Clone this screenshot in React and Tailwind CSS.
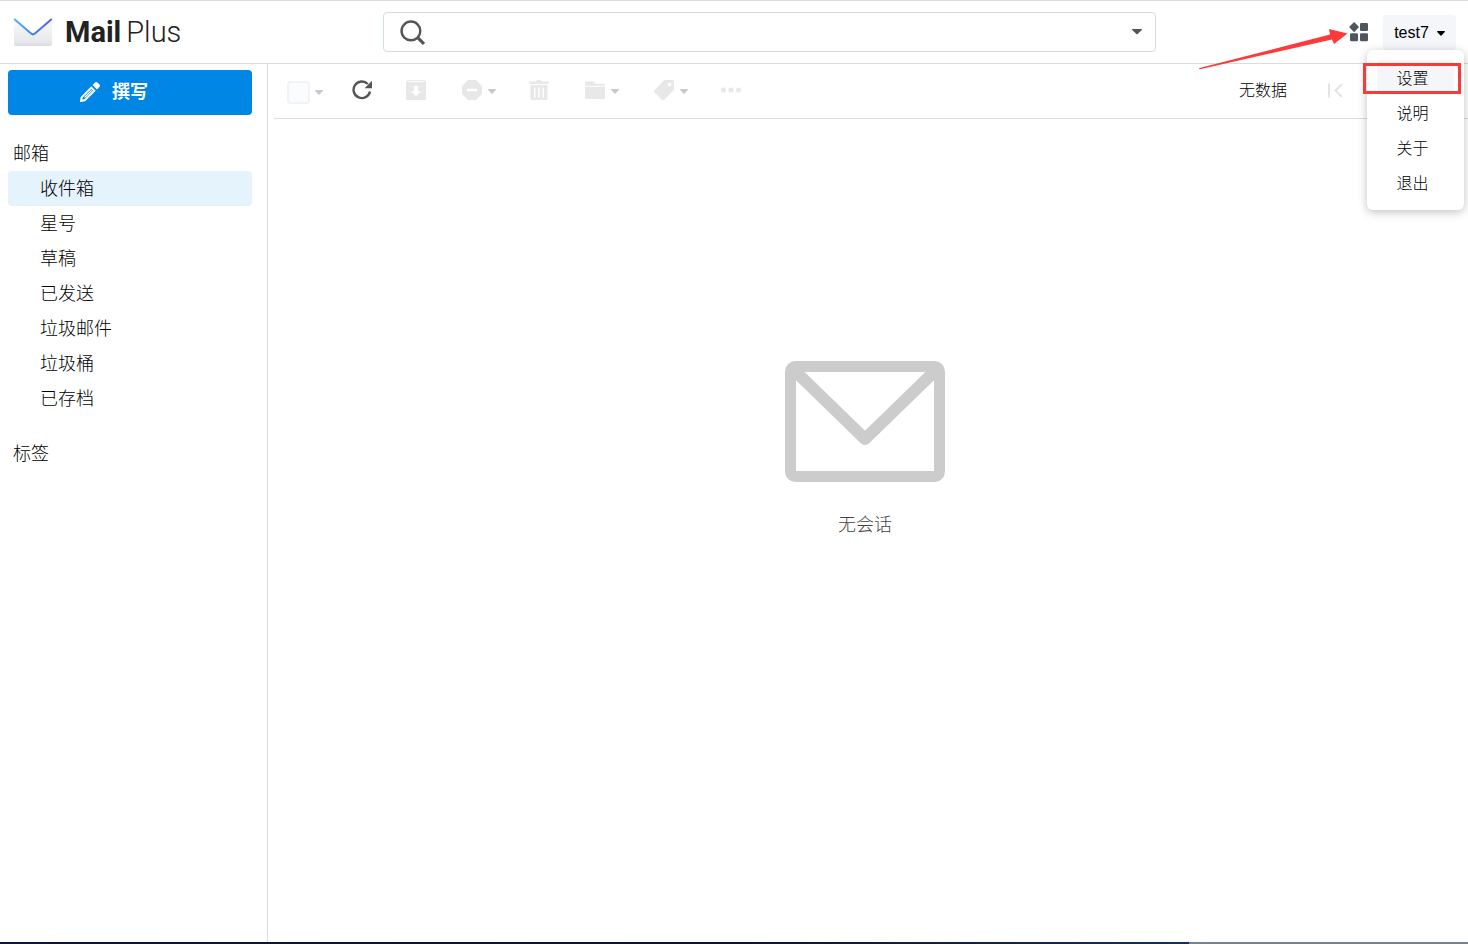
import React, { useState } from "react";

const folders = ["收件箱", "星号", "草稿", "已发送", "垃圾邮件", "垃圾桶", "已存档"];
const userMenu = ["设置", "说明", "关于", "退出"];

const Caret = ({ className = "" }) => (
  <svg viewBox="0 0 8 5" className={`w-2 h-[5px] shrink-0 ${className}`} fill="currentColor" aria-hidden="true">
    <path d="M.6 0h6.8c.5 0 .7.6.4.9L4.5 4.5a.7.7 0 0 1-1 0L.2.9C-.1.6.1 0 .6 0z" />
  </svg>
);

const ToolIcon = ({ children }) => (
  <svg viewBox="0 0 20 20" className="w-5 h-5 shrink-0" fill="currentColor" aria-hidden="true">
    {children}
  </svg>
);

const ToolButton = ({ label, children }) => (
  <button aria-label={label} className="w-[22px] h-8 flex items-center justify-center">
    <ToolIcon>{children}</ToolIcon>
  </button>
);

const ToolDropdown = ({ label, children }) => (
  <button aria-label={label} className="h-8 pl-[3px] flex items-center gap-[6px]">
    <ToolIcon>{children}</ToolIcon>
    <Caret className="mt-[3px] text-[#c8c8c8]" />
  </button>
);

const Logo = () => (
  <a href="#" className="w-[383px] shrink-0 pl-[13px] flex items-center gap-3 text-[#222]">
    <svg viewBox="0 0 40 30" className="w-10 h-[30px]" aria-hidden="true">
      <defs>
        <linearGradient id="logoBody" x1="0" y1="0" x2="0" y2="1">
          <stop offset="0" stopColor="#fbfbfc" />
          <stop offset=".85" stopColor="#e7e8ea" />
          <stop offset="1" stopColor="#d9dadc" />
        </linearGradient>
        <linearGradient id="logoFlap" x1="0" y1="0" x2="1" y2="0">
          <stop offset="0" stopColor="#55b4f6" />
          <stop offset=".5" stopColor="#4284f5" />
          <stop offset="1" stopColor="#5a5cf0" />
        </linearGradient>
      </defs>
      <path d="M1 1.500L20 17 39 1.500V27a2 2 0 0 1-2 2H3a2 2 0 0 1-2-2z" fill="url(#logoBody)" />
      <path d="M1.200 2l16.600 14.300a3.200 3.200 0 0 0 4.400 0L38.800 2" fill="none" stroke="url(#logoFlap)" strokeWidth="2" />
    </svg>
    <span className="flex gap-[5px] font-[Roboto,sans-serif] text-[29px] leading-9">
      <span className="font-bold">Mail</span>
      <span className="font-light">Plus</span>
    </span>
  </a>
);

const Header = () => {
  const [open, setOpen] = useState(true);

  return (
    <header className="h-16 shrink-0 border-y border-[#dcdcdc] flex items-center">
      <Logo />

      <div className="flex-1 h-10 pl-4 pr-[13px] flex items-center gap-3 border border-[#d2dce8] rounded">
        <svg viewBox="0 0 24 24" className="w-[25px] h-[25px] shrink-0" fill="none" stroke="#555" strokeWidth="2.300" aria-hidden="true">
          <circle cx="10.500" cy="10.500" r="9" />
          <path d="M17 17l6 6" strokeWidth="3" />
        </svg>
        <input type="text" aria-label="搜索" className="flex-1 min-w-0 h-full outline-none" />
        <button aria-label="高级搜索" className="text-[#555]">
          <svg viewBox="0 0 10 6" className="w-[10px] h-[6px]" fill="currentColor">
            <path d="M.5 0h9c.5 0 .6.500.300.900L5.600 5a.8.8 0 0 1-1.200 0L.200.900C-.1.500 0 0 .5 0z" />
          </svg>
        </button>
      </div>

      <div className="w-[312px] shrink-0 pr-3 flex items-center justify-end gap-[14px]">
        <button aria-label="应用" className="text-[#50565f]">
          <svg viewBox="0 0 20 20" className="w-5 h-5" fill="currentColor">
            <path d="M5.100 0l4.500 4.600a.7.7 0 0 1 0 1L5.100 10.200.500 5.600a.7.7 0 0 1 0-1z" />
            <rect x="11" y="1" width="8" height="8" rx="1.200" />
            <rect x="1" y="11.200" width="8" height="8" rx="1.200" />
            <rect x="11" y="11.200" width="8" height="8" rx="1.200" />
          </svg>
        </button>
        <div className="relative">
          <button
            onClick={() => setOpen(!open)}
            aria-expanded={open}
            className="w-[73px] h-[35px] pt-[2px] flex items-center justify-center gap-2 rounded bg-[#f4f6fa] text-black"
          >
            test7
            <Caret />
          </button>
          {open && (
            <ul className="absolute z-10 top-full -right-2 w-[97px] p-[10px] bg-white rounded-md shadow-[0_2px_10px_rgba(0,0,0,0.25)]">
              {userMenu.map((item, i) => (
                <li key={item}>
                  <button
                    className={`w-full h-[35px] pt-1 pr-[6px] rounded text-center ${i === 0 ? "bg-[#f4f6fa]" : ""}`}
                  >
                    {item}
                  </button>
                </li>
              ))}
            </ul>
          )}
          {/* Marker pointing at the settings entry */}
          <div className="absolute z-20 top-12 -right-[5px] w-[98px] h-[31px] border-3 border-[#f93a3a] pointer-events-none" />
          <svg
            viewBox="0 0 150 42"
            className="absolute z-20 top-[13px] right-[107px] w-[150px] h-[42px] pointer-events-none"
            fill="#fb3b3a"
            aria-hidden="true"
          >
            <path d="M.5 40L131 6.500l-1-5.500 18.500 4.500L135 16l-2-4.500L1 41.200a.6.6 0 0 1-.5-1.200z" />
          </svg>
        </div>
      </div>
    </header>
  );
};

const Sidebar = () => (
  <aside className="w-[268px] shrink-0 pt-[6px] pl-2 pr-[15px] border-r border-[#dcdcdc] text-lg">
    <button className="w-full h-[45px] pb-[2px] pr-8 flex items-center justify-center gap-3 rounded bg-[#0086e5] text-white font-bold">
      <svg viewBox="0 0 20 20" className="w-5 h-5" fill="currentColor" aria-hidden="true">
        <path
          fillRule="evenodd"
          d="M11.300 4.300l4.400 4.400L5.100 19.300.9 20a.8.8 0 0 1-.9-.9l.7-4.200zM11.300 7L2.700 15.600l-.3 2 2-.3L13 8.700z"
        />
        <path d="M11.300 7.900l.9.9-7.200 7.200-.9-.9z" />
        <path d="M12.600 3l2.300-2.300a2 2 0 0 1 2.800 0l1.600 1.600a2 2 0 0 1 0 2.800L17 7.400z" />
      </svg>
      撰写
    </button>

    <h2 className="mt-[21px] h-[35px] pl-[5px] flex items-center">邮箱</h2>
    <ul>
      {folders.map((name, i) => (
        <li key={name}>
          <a
            href="#"
            className={`h-[35px] pl-8 flex items-center rounded ${i === 0 ? "bg-[#e5f3fc] text-black" : ""}`}
          >
            {name}
          </a>
        </li>
      ))}
    </ul>
    <h2 className="mt-5 h-[35px] pl-[5px] flex items-center">标签</h2>
  </aside>
);

const Toolbar = () => (
  <div className="ml-[6px] h-[55px] pl-[13px] flex items-center border-b border-[#dcdcdc]">
    <div className="pb-[2px] flex items-center gap-7 text-[#e8e8e8]">
      <div className="mt-1 flex items-center gap-[5px]">
        <input
          type="checkbox"
          aria-label="全选"
          className="appearance-none w-[23px] h-[23px] rounded border-2 border-[#f1f3f9] bg-[#fbfcfe]"
        />
        <button aria-label="选择">
          <Caret className="text-[#c8c9ce]" />
        </button>
      </div>

      <div className="flex items-center gap-8">
        <button aria-label="刷新" className="w-[22px] h-8 flex items-center justify-center text-[#555]">
          <ToolIcon>
            <path
              d="M18 11.500A8.300 8.300 0 1 1 15.800 4"
              fill="none"
              stroke="currentColor"
              strokeWidth="2.400"
            />
            <path d="M20 .8v7.400h-7.400z" />
          </ToolIcon>
        </button>
        <ToolButton label="存档">
          <path
            fillRule="evenodd"
            d="M2 0h16l2 2v16.500a1.500 1.500 0 0 1-1.500 1.500h-17A1.500 1.500 0 0 1 0 18.500V2zM1.800 2h16.400l-.9-.9H2.700zM8 6v5H5l5 5.500 5-5.500h-3V6z"
          />
        </ToolButton>
        <ToolDropdown label="垃圾邮件">
          <path fillRule="evenodd" d="M6 0h8l6 6v8l-6 6H6l-6-6V6zM5 8.700v2.600h10V8.700z" />
        </ToolDropdown>
        <ToolButton label="删除">
          <path d="M.5 1.500H7L8 0h4l1 1.500h6.500V4H.5z" />
          <path
            fillRule="evenodd"
            d="M1.500 5h17v13.500A1.500 1.500 0 0 1 17 20H3a1.500 1.500 0 0 1-1.500-1.500zM5 7.500v10h1.500v-10zm4.200 0v10h1.600v-10zm4.300 0v10H15v-10z"
          />
        </ToolButton>
        <ToolDropdown label="移动">
          <path d="M0 2.500a1 1 0 0 1 1-1h8l2 2.300h8a1 1 0 0 1 1 1v.9H0z" />
          <path d="M0 6.800h20v11a1.200 1.200 0 0 1-1.200 1.200H1.200A1.200 1.200 0 0 1 0 17.800z" />
        </ToolDropdown>
        <ToolDropdown label="标签">
          <path
            fillRule="evenodd"
            d="M11 0h7.500A1.500 1.500 0 0 1 20 1.500V9a2 2 0 0 1-.6 1.400l-9 9a2 2 0 0 1-2.800 0L.5 12.400a1.500 1.500 0 0 1 0-2.200L9.600.600A2 2 0 0 1 11 0zM15.500 2.700a1.900 1.900 0 1 0 0 3.800 1.900 1.900 0 0 0 0-3.800z"
          />
        </ToolDropdown>
        <ToolButton label="更多">
          <circle cx="2.500" cy="10" r="2.500" />
          <circle cx="10" cy="10" r="2.500" />
          <circle cx="17.500" cy="10" r="2.500" />
        </ToolButton>
      </div>
    </div>

    <div className="ml-auto pr-[125px] flex items-center gap-10">
      <span>无数据</span>
      <button aria-label="第一页" className="text-[#e4e4e4]">
        <svg viewBox="0 0 16 16" className="w-4 h-4" fill="none" stroke="currentColor" strokeWidth="2">
          <path d="M2 .5v14M15 1L8.500 7.500 15 14" />
        </svg>
      </button>
    </div>
  </div>
);

const EmptyState = () => (
  <div className="pt-[242px] pl-[6px] pr-3 flex flex-col items-center">
    <svg viewBox="0 0 160 122" className="w-40 h-[122px]" aria-hidden="true">
      <rect x="5.500" y="5.500" width="149" height="110" rx="5" fill="none" stroke="#ccc" strokeWidth="11" />
      <path d="M9 9l71 69 71-69" fill="none" stroke="#ccc" strokeWidth="12" strokeLinejoin="round" />
    </svg>
    <p className="mt-7 text-lg text-[#444]">无会话</p>
  </div>
);

const App = () => {
  return (
    <div className="min-h-screen flex flex-col bg-white text-base text-black font-light font-['Liberation_Sans','Noto_Sans_CJK_SC',sans-serif]">
      <Header />
      <div className="flex-1 flex">
        <Sidebar />
        <main className="flex-1 min-w-0">
          <Toolbar />
          <EmptyState />
        </main>
      </div>
      <div className="h-[2px] shrink-0 bg-linear-to-r from-[#0c1440] via-[#10132f] via-50% to-[#1c3f7c] flex justify-end">
        <div className="w-[19%] bg-[#75828f]" />
      </div>
    </div>
  );
};

export default App;
